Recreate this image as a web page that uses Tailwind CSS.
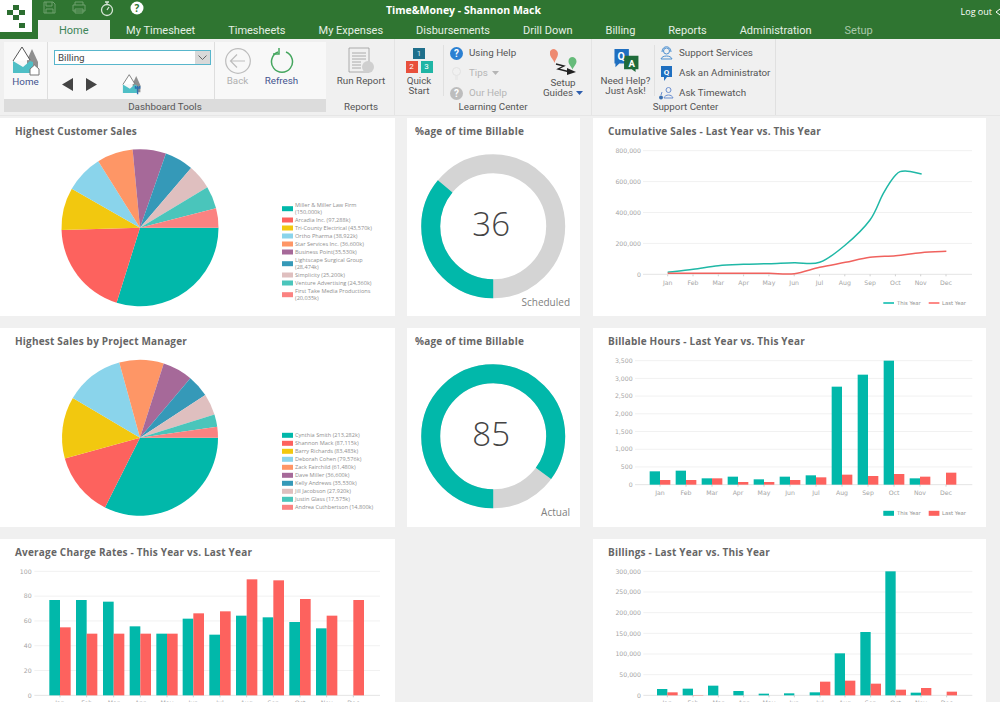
<!DOCTYPE html>
<html lang="en">
<head>
    <meta charset="UTF-8">
    <title>Time&amp;Money - Dashboard</title>
    <script src="https://cdn.jsdelivr.net/npm/@tailwindcss/browser@4"></script>
</head>
<body class="w-[1000px] h-[702px] overflow-hidden bg-[#f0f0f0] font-['Open_Sans',sans-serif]">

    <!-- Title bar and tabs -->
    <header class="relative h-[39px] bg-[#2f7531] text-white">
        <div class="absolute left-0 top-0 w-[32px] h-[32px] bg-white">
            <svg viewBox="0 0 32 32" class="w-[32px] h-[32px]" fill="#2c6e30">
                <rect x="13" y="5" width="6" height="5"/><rect x="7" y="10" width="6" height="5"/><rect x="19" y="10" width="6" height="5"/>
                <rect x="13" y="15" width="6" height="5"/><rect x="19" y="23" width="6" height="5"/>
            </svg>
        </div>
        <div class="flex h-[20px]">
            <div class="flex items-start w-[385px] pl-[43px] pt-[1px]">
                <svg viewBox="0 0 13 13" class="w-[13px] h-[13px]" fill="none" stroke="#6ea16f"><path d="M1 1h9l2 2v9H1zM3 1v4h6V1M3 12V8h7v4"/></svg>
                <svg viewBox="0 0 14 13" class="w-[14px] h-[13px] ml-[16px]" fill="none" stroke="#6ea16f"><path d="M3 4V1h8v3M1 4h12v6H1zM3 8h8v4H3z"/></svg>
                <svg viewBox="0 0 14 16" class="w-[14px] h-[16px] ml-[14px]" fill="none" stroke="#d5e5d5" stroke-width="1.3"><circle cx="7" cy="9" r="5.5"/><path d="M5 1h4M7 1v2M7 9l2-3"/></svg>
                <svg viewBox="0 0 14 14" class="w-[14px] h-[14px] ml-[16px]"><circle cx="7" cy="7" r="6.5" fill="#fff"/><text x="7" y="10.5" text-anchor="middle" font-size="10" font-weight="700" fill="#2f7531">?</text></svg>
            </div>
            <div class="w-[157px] text-[10.5px] leading-[20px] font-bold whitespace-nowrap text-center">Time&amp;Money - Shannon Mack</div>
            <div class="ml-auto flex items-center pt-[3px] text-[9px] leading-[16px]">
                <span>Log out</span>
                <svg viewBox="0 0 5 8" class="w-[5px] h-[8px] ml-[3px]" fill="none" stroke="#fff"><path d="M5 1L1 4l4 3"/></svg>
            </div>
        </div>
        <nav class="flex pl-[38px] h-[19px] text-[11px] leading-[21px] font-['Roboto',sans-serif] whitespace-nowrap text-[#e4efe4]">
            <div class="px-[21px] bg-[#f0f0f0] text-[#3d8558]">Home</div>
            <div class="px-[16.5px]">My Timesheet</div>
            <div class="px-[16.5px]">Timesheets</div>
            <div class="px-[16.5px]">My Expenses</div>
            <div class="px-[16.5px]">Disbursements</div>
            <div class="px-[16.5px]">Drill Down</div>
            <div class="px-[16.5px]">Billing</div>
            <div class="px-[16.5px]">Reports</div>
            <div class="px-[16.5px]">Administration</div>
            <div class="px-[16.5px] text-[#a9c9aa]">Setup</div>
        </nav>
    </header>

    <!-- Ribbon -->
    <section class="flex h-[77px] pl-[4px] border-b border-[#e6e6e6] font-['Roboto',sans-serif] text-[9.8px] leading-[10px] text-[#555] whitespace-nowrap">

        <!-- Dashboard Tools -->
        <div class="w-[322px] flex flex-col">
            <div class="flex h-[57px] mt-[3px] bg-[#f8f8f8]">
                <div class="w-[44px] flex flex-col items-center pt-[4px] pb-[3px] border-r border-[#dedede]">
                    <svg viewBox="11 46 28 30" class="w-[28px] h-[30px]">
                        <path d="M26 60l5-11 6 13v10H26z" fill="#8f8f8f"/>
                        <path d="M12 61l9-14 8 13" fill="#fff" stroke="#555"/>
                        <path d="M12 61l10 6 7-6 3 1v11H12z" fill="#4fbfc6"/>
                        <path d="M29 69l4.500-4 4.500 4v6h-9z" fill="#fff" stroke="#777"/>
                    </svg>
                    <span class="mt-[1px] text-[#44548f]">Home</span>
                </div>
                <div class="w-[167px] pl-[6px] pt-[8px] border-r border-[#dedede]">
                    <div class="flex items-center w-[157px] h-[15px] bg-white border border-[#58b6cc] pl-[3px] text-[#444]">
                        <span>Billing</span>
                        <span class="ml-auto flex items-center justify-center w-[15px] h-[13px] bg-[#d9d9d9]">
                            <svg viewBox="0 0 9 5" class="w-[9px] h-[5px]" fill="none" stroke="#666"><path d="M0.500 0.500l4 4 4-4"/></svg>
                        </span>
                    </div>
                    <div class="flex items-center mt-[9px]">
                        <svg viewBox="0 0 11 13" class="w-[11px] h-[13px] ml-[8px]" fill="#444"><path d="M11 0v13L0 6.500z"/></svg>
                        <svg viewBox="0 0 11 13" class="w-[11px] h-[13px] ml-[13px]" fill="#444"><path d="M0 0v13l11-6.500z"/></svg>
                        <svg viewBox="11 46 28 30" class="w-[20px] h-[21px] ml-[25px]">
                            <path d="M26 60l5-11 6 13v10H26z" fill="#8f8f8f"/>
                            <path d="M12 61l9-14 8 13" fill="#fff" stroke="#555"/>
                            <path d="M12 61l10 6 7-6 3 1v11H12z" fill="#4fbfc6"/>
                            <path d="M33 63v12M30 63v3h6v-3" fill="none" stroke="#2f6fb0" stroke-width="2"/>
                        </svg>
                    </div>
                </div>
                <div class="w-[45px] flex flex-col items-center pt-[6px] pb-[3px] text-[#b0b0b0]">
                    <svg viewBox="0 0 26 26" class="w-[26px] h-[26px]" fill="none" stroke="#bdbdbd" stroke-width="1.200"><circle cx="13" cy="13" r="12.300"/><path d="M20 13H6M12 6.500L5.500 13l6.500 6.500"/></svg>
                    <span class="mt-[2px]">Back</span>
                </div>
                <div class="w-[43px] flex flex-col items-center pt-[6px] pb-[3px] text-[#44548f]">
                    <svg viewBox="0 0 24 26" class="w-[24px] h-[26px]" fill="none" stroke="#45a65f" stroke-width="1.500"><path d="M8 4a10.500 10.500 0 1 0 8 0"/><path d="M9 0v6H3"/></svg>
                    <span class="mt-[2px]">Refresh</span>
                </div>
            </div>
            <div class="h-[13px] bg-[#dcdcdc] text-center leading-[15px]">Dashboard Tools</div>
        </div>

        <!-- Reports -->
        <div class="w-[67px] ml-[2px] flex flex-col items-center border-r border-[#e4e4e4]">
            <div class="h-[60px] flex flex-col items-center pt-[8px]">
                <svg viewBox="0 0 27 26" class="w-[27px] h-[26px]" fill="none" stroke="#9a9a9a"><path d="M1 1h20v24H1zM4 6h14M4 9h14M4 12h14M4 15h9M4 18h9M4 21h9" stroke-width="0.800"/><circle cx="20" cy="20" r="6" fill="#cfcfcf" stroke="none"/></svg>
                <span class="mt-[3px]">Run Report</span>
            </div>
            <div class="leading-[15px]">Reports</div>
        </div>

        <!-- Learning Center -->
        <div class="w-[197px] flex flex-col border-r border-[#e4e4e4]">
            <div class="h-[60px] flex">
                <div class="w-[49px] mt-[6px] mb-[3px] flex flex-col items-center border-r border-[#e0e0e0]">
                    <div class="flex items-center justify-center w-[12px] h-[12px] mt-[3px] bg-[#1f6f8b] text-[8px] text-[#cfe8ef]">1</div>
                    <div class="flex gap-[3px] mt-[2px] text-[8px]">
                        <div class="flex items-center justify-center w-[12px] h-[12px] bg-[#e8503c] text-white">2</div>
                        <div class="flex items-center justify-center w-[12px] h-[12px] bg-[#1fb5a5] text-white">3</div>
                    </div>
                    <span class="mt-[3px] text-center">Quick<br>Start</span>
                </div>
                <div class="w-[96px] pl-[6px] pt-[4px]">
                    <div class="flex items-center h-[20px] gap-[6px]">
                        <svg viewBox="0 0 13 13" class="w-[13px] h-[13px]"><circle cx="6.500" cy="6.500" r="6.500" fill="#2b80d2"/><text x="6.500" y="10" text-anchor="middle" font-size="10" font-weight="700" fill="#fff">?</text></svg>
                        <span>Using Help</span>
                    </div>
                    <div class="flex items-center h-[20px] gap-[6px] text-[#b5b5b5]">
                        <svg viewBox="0 0 13 14" class="w-[13px] h-[14px]" fill="none" stroke="#e2e2e2"><circle cx="6.500" cy="5.500" r="4"/><path d="M5 11h3M5 13h3"/></svg>
                        <span>Tips</span>
                        <svg viewBox="0 0 7 4" class="w-[7px] h-[4px] -ml-[2px]" fill="#b5b5b5"><path d="M0 0h7L3.500 4z"/></svg>
                    </div>
                    <div class="flex items-center h-[20px] gap-[6px] text-[#b5b5b5]">
                        <svg viewBox="0 0 13 13" class="w-[13px] h-[13px]"><circle cx="6.500" cy="6.500" r="6.500" fill="#bdbdbd"/><text x="6.500" y="10" text-anchor="middle" font-size="10" font-weight="700" fill="#fff">?</text></svg>
                        <span>Our Help</span>
                    </div>
                </div>
                <div class="w-[46px] pt-[10px] flex flex-col items-center">
                    <svg viewBox="0 0 28 26" class="w-[28px] h-[26px] ml-[1px]">
                        <path d="M3 0a5 5 0 0 1 5 5c0 3-3 6-3.500 9C4 11 0 8 0 5a4 4 0 0 1 3-5z" fill="#ee8a70"/>
                        <path d="M22 8a4.500 4.500 0 0 1 4.500 4.500c0 3-3 5-4 8-1-3-4-5-4-8A4.500 4.500 0 0 1 22 8z" fill="#66bb7a"/>
                        <path d="M6 15l8 2-6 3 12 3" fill="none" stroke="#222" stroke-width="1.300"/>
                        <path d="M17 19l9 4-9 3z" fill="#222"/>
                    </svg>
                    <span class="mt-[3px]">Setup</span>
                    <span class="flex items-center gap-[3px]">Guides<svg viewBox="0 0 7 4" class="w-[7px] h-[4px]" fill="#2f5fae"><path d="M0 0h7L3.500 4z"/></svg></span>
                </div>
            </div>
            <div class="text-center leading-[15px]">Learning Center</div>
        </div>

        <!-- Support Center -->
        <div class="w-[184px] flex flex-col border-r border-[#e0e0e0]">
            <div class="h-[60px] flex">
                <div class="w-[63px] mt-[6px] mb-[3px] pl-[5px] flex flex-col items-center border-r border-[#e0e0e0]">
                    <svg viewBox="0 0 27 24" class="w-[27px] h-[24px] mt-[4px]">
                        <path d="M2 0h15v15H7l-4 4v-4H2z" fill="#1f6fc0"/>
                        <path d="M12 7h15v14h-3v3l-4-3h-8z" fill="#1f6b3a"/>
                        <text x="9" y="11.500" text-anchor="middle" font-size="11" font-weight="700" fill="#fff">Q</text>
                        <text x="20" y="18.500" text-anchor="middle" font-size="10" font-weight="700" fill="#fff">A</text>
                    </svg>
                    <span class="mt-[4px] text-center">Need Help?<br>Just Ask!</span>
                </div>
                <div class="pl-[4px] pt-[4px]">
                    <div class="flex items-center h-[20px] gap-[5px]">
                        <svg viewBox="0 0 15 14" class="w-[15px] h-[14px]" fill="none" stroke="#4b8fd0"><circle cx="7.500" cy="5" r="3"/><path d="M3 6c0-7 9-7 9 0M2 13c1-4 10-4 11 0z"/></svg>
                        <span>Support Services</span>
                    </div>
                    <div class="flex items-center h-[20px] gap-[5px]">
                        <svg viewBox="0 0 15 15" class="w-[15px] h-[15px]"><path d="M2 0h11v11H8l-3 4v-4H2z" fill="#1f6fc0"/><text x="7.500" y="8.500" text-anchor="middle" font-size="8" font-weight="700" fill="#fff">Q</text></svg>
                        <span>Ask an Administrator</span>
                    </div>
                    <div class="flex items-center h-[20px] gap-[5px]">
                        <svg viewBox="0 0 15 14" class="w-[15px] h-[14px]" fill="none" stroke="#6b8fd0"><circle cx="9.500" cy="4" r="2.500"/><path d="M5 12c1-4 8-4 9 0zM3 6l-1 3"/><circle cx="2" cy="11.500" r="2" fill="#3b6fb0" stroke="none"/></svg>
                        <span>Ask Timewatch</span>
                    </div>
                </div>
            </div>
            <div class="pl-[4px] text-center leading-[15px]">Support Center</div>
        </div>
    </section>

    <!-- Dashboard cards -->
    <main class="grid grid-cols-[395px_173px_394px] grid-rows-[198px_199px_163px] gap-x-[12px] gap-y-[12px] pt-[2px]">
        <div class="bg-white overflow-hidden">
            <h2 class="pl-[15px] pt-[6px] h-[22px] text-[10px] leading-[14px] font-bold tracking-[0.2px] text-[#666]">Highest Customer Sales</h2>
            <svg id="pie-customers" viewBox="0 140 395 176" class="w-[395px] h-[176px]"></svg>
        </div>
        <div class="bg-white overflow-hidden">
            <h2 class="pl-[8px] pt-[6px] h-[22px] text-[10px] leading-[14px] font-bold tracking-[0.2px] text-[#666]">%age of time Billable</h2>
            <svg id="donut-scheduled" viewBox="407 140 173 176" class="w-[173px] h-[176px]"></svg>
        </div>
        <div class="ml-[1px] bg-white overflow-hidden">
            <h2 class="pl-[15px] pt-[6px] h-[22px] text-[10px] leading-[14px] font-bold tracking-[0.2px] text-[#666]">Cumulative Sales - Last Year vs. This Year</h2>
            <svg id="line-sales" viewBox="593 140 393 176" class="w-[393px] h-[176px]"></svg>
        </div>

        <div class="bg-white overflow-hidden">
            <h2 class="pl-[15px] pt-[6px] h-[22px] text-[10px] leading-[14px] font-bold tracking-[0.2px] text-[#666]">Highest Sales by Project Manager</h2>
            <svg id="pie-managers" viewBox="0 350 395 177" class="w-[395px] h-[177px]"></svg>
        </div>
        <div class="bg-white overflow-hidden">
            <h2 class="pl-[8px] pt-[6px] h-[22px] text-[10px] leading-[14px] font-bold tracking-[0.2px] text-[#666]">%age of time Billable</h2>
            <svg id="donut-actual" viewBox="407 350 173 177" class="w-[173px] h-[177px]"></svg>
        </div>
        <div class="ml-[1px] bg-white overflow-hidden">
            <h2 class="pl-[15px] pt-[6px] h-[22px] text-[10px] leading-[14px] font-bold tracking-[0.2px] text-[#666]">Billable Hours - Last Year vs. This Year</h2>
            <svg id="bars-hours" viewBox="593 350 393 177" class="w-[393px] h-[177px]"></svg>
        </div>

        <div class="bg-white overflow-hidden">
            <h2 class="pl-[15px] pt-[6px] h-[22px] text-[10px] leading-[14px] font-bold tracking-[0.2px] text-[#666]">Average Charge Rates - This Year vs. Last Year</h2>
            <svg id="bars-rates" viewBox="0 561 395 141" class="w-[395px] h-[141px]"></svg>
        </div>
        <div></div>
        <div class="ml-[1px] bg-white overflow-hidden">
            <h2 class="pl-[15px] pt-[6px] h-[22px] text-[10px] leading-[14px] font-bold tracking-[0.2px] text-[#666]">Billings - Last Year vs. This Year</h2>
            <svg id="bars-billings" viewBox="593 561 393 141" class="w-[393px] h-[141px]"></svg>
        </div>
    </main>

<script>
    // Chart coordinates are page pixels, every svg viewBox is its place on the page
    const TEAL = '#01b8aa', RED = '#fd625e';
    const COLORS = [TEAL, RED, '#f2c80f', '#8ad4eb', '#fe9666', '#a66999', '#3599b8', '#dfbfbf', '#4ac5bb', '#fb8281'];
    const MONTHS = ['Jan', 'Feb', 'Mar', 'Apr', 'May', 'Jun', 'Jul', 'Aug', 'Sep', 'Oct', 'Nov', 'Dec'];
    const AXIS_FONT = 'font-family="DejaVu Sans, sans-serif" font-size="6.2" fill="#a5a5a5"';

    function pie(id, cx, cy, r, ends, legend) {
        let html = '';
        let startX = cx + r, startY = cy;
        ends.forEach(([ex, ey], i) => {
            const a = Math.atan2(ey, ex);
            const x = cx + r * Math.cos(a), y = cy + r * Math.sin(a);
            const prev = i === 0 ? 0 : Math.atan2(ends[i - 1][1], ends[i - 1][0]);
            let delta = a - prev;
            if (delta < 0) delta += 2 * Math.PI;
            html += `<path d="M${cx} ${cy}L${startX} ${startY}A${r} ${r} 0 ${delta > Math.PI ? 1 : 0} 1 ${x} ${y}Z" fill="${COLORS[i]}"/>`;
            startX = x; startY = y;
        });
        legend.forEach(([swatchY, lines], i) => {
            html += `<rect x="282" y="${swatchY - 2.5}" width="11" height="5" fill="${COLORS[i]}"/>`;
            lines.forEach(([y, text]) => {
                html += `<text x="295" y="${y + 1.9}" font-size="5.6" fill="#8f8f8f">${text}</text>`;
            });
        });
        document.getElementById(id).innerHTML = html;
    }

    function donut(id, cy, percent, value, caption) {
        const cx = 493.2, r = 62.5, c = 2 * Math.PI * r;
        const teal = c * percent / 100;
        const html = `<circle cx="${cx}" cy="${cy}" r="${r}" fill="none" stroke="#d4d4d4" stroke-width="19"/>
            <circle cx="${cx}" cy="${cy}" r="${r}" fill="none" stroke="${TEAL}" stroke-width="19" stroke-dasharray="${teal} ${c}" transform="rotate(90 ${cx} ${cy})"/>
            <text x="${cx - 2}" y="${cy + 10}" text-anchor="middle" font-size="33" font-weight="300" fill="#444">${value}</text>
            <text x="570" y="${cy + 79.500}" text-anchor="end" font-size="10" fill="#808080">${caption}</text>`;
        document.getElementById(id).innerHTML = html;
    }

    // Y axis grid, value labels, month labels and ticks
    function axes(o) {
        let html = '';
        o.labels.forEach((label, i) => {
            const y = o.bottom - (o.bottom - o.top) * i / (o.labels.length - 1);
            html += `<line x1="${o.left}" x2="${o.right}" y1="${y}" y2="${y}" stroke="${i ? '#f1f1f1' : '#e4e4e4'}"/>`;
            html += `<text x="${o.labelX}" y="${y + 2.2}" text-anchor="end" ${AXIS_FONT}>${label}</text>`;
        });
        o.centers.forEach((x, i) => {
            html += `<line x1="${x}" x2="${x}" y1="${o.bottom}" y2="${o.bottom + 2}" stroke="#d0d0d0"/>`;
            html += `<text x="${x}" y="${o.monthY}" text-anchor="middle" ${AXIS_FONT}>${MONTHS[i]}</text>`;
        });
        return html;
    }

    function legendRow(y, bars) {
        const mark = (x, fill) => bars
            ? `<rect x="${x}" y="${y - 2.500}" width="10.700" height="5" fill="${fill}"/>`
            : `<line x1="${x}" x2="${x + 10.700}" y1="${y}" y2="${y}" stroke="${fill}" stroke-width="1.500"/>`;
        const label = (x, text) => `<text x="${x}" y="${y + 2}" font-family="DejaVu Sans, sans-serif" font-size="5.300" fill="#8f8f8f">${text}</text>`;
        return mark(883.3, TEAL) + label(897, 'This Year') + mark(928.7, RED) + label(942, 'Last Year');
    }

    // Tops are read off the chart, 3x zoom values relative to x0 / y0
    function bars(id, o) {
        const zx = v => o.x0 + v / 3, zy = v => o.y0 + v / 3;
        const bottom = zy(o.zeroZ);
        const centers = o.centersZ.map(zx);
        let html = axes({ ...o, centers, left: zx(o.leftZ), right: zx(o.rightZ), top: zy(o.topZ), bottom, labelX: zx(o.labelZ), monthY: zy(o.monthZ) });
        const w = o.widthZ / 3;
        centers.forEach((x, i) => {
            if (o.teal[i]) html += `<rect x="${x - w}" y="${zy(o.teal[i])}" width="${w}" height="${bottom - zy(o.teal[i])}" fill="${TEAL}"/>`;
            if (o.red[i]) html += `<rect x="${x}" y="${zy(o.red[i])}" width="${w}" height="${bottom - zy(o.red[i])}" fill="${RED}"/>`;
        });
        if (o.legendY) html += legendRow(o.legendY, true);
        document.getElementById(id).innerHTML = html;
    }

    function smooth(points) {
        let d = `M${points[0][0]} ${points[0][1]}`;
        for (let i = 0; i < points.length - 1; i++) {
            const p0 = points[i - 1] || points[i], p1 = points[i], p2 = points[i + 1], p3 = points[i + 2] || p2;
            d += `C${p1[0] + (p2[0] - p0[0]) / 6} ${p1[1] + (p2[1] - p0[1]) / 6} ${p2[0] - (p3[0] - p1[0]) / 6} ${p2[1] - (p3[1] - p1[1]) / 6} ${p2[0]} ${p2[1]}`;
        }
        return d;
    }

    pie('pie-customers', 140, 227.7, 78.5,
        [[-70, 224], [-233, 7], [-202, -115], [-123, -196], [-22, -233], [77, -220], [151, -176], [200, -120], [228, -58], [236, 0]],
        [[208.7, [[205, 'Miller &amp; Miller Law Firm'], [212, '(150,000k)']]], [220, [[220, 'Arcadia Inc. (97,288k)']]], [228, [[228, 'Tri-County Electrical (43,570k)']]],
         [236, [[236, 'Ortho Pharma (38,922k)']]], [244, [[244, 'Star Services Inc. (36,600k)']]], [252, [[252, 'Business Point(35,530k)']]],
         [263.7, [[260, 'Lightscape Surgical Group'], [267, '(28,474k)']]], [275, [[275, 'Simplicity (25,200k)']]], [283, [[283, 'Venture Advertising (24,360k)']]],
         [294.7, [[291, 'First Take Media Productions'], [298, '(20,035k)']]]]);

    pie('pie-managers', 140, 437.7, 78,
        [[-104, 207], [-224, 62], [-200, -118], [-62, -225], [71, -222], [142, -168], [196, -128], [224, -70], [234, -33], [236, 0]],
        [[435.3, [[435.3, 'Cynthia Smith (213,282k)']]], [443.3, [[443.3, 'Shannon Mack (87,115k)']]], [451.3, [[451.3, 'Barry Richards (83,483k)']]],
         [459.3, [[459.3, 'Deborah Cohen (79,576k)']]], [467.3, [[467.3, 'Zack Fairchild (61,480k)']]], [475.3, [[475.3, 'Dave Miller (36,600k)']]],
         [483.3, [[483.3, 'Kelly Andrews (35,530k)']]], [491.3, [[491.3, 'Jill Jacobson (27,920k)']]], [499.3, [[499.3, 'Justin Glass (17,575k)']]],
         [507.3, [[507.3, 'Andrea Cuthbertson (14,800k)']]]]);

    donut('donut-scheduled', 226.3, 36, '36', 'Scheduled');
    donut('donut-actual', 436.3, 85, '85', 'Actual');

    // Cumulative sales
    const lineX = v => 590 + v / 3, lineY = v => 120 + v / 3;
    const toPage = pts => pts.map(([x, y]) => [lineX(x), lineY(y)]);
    const tealLine = [[233, 457], [310, 448], [385, 437], [460, 433], [537, 431], [613, 428], [689, 427], [766, 375], [840, 300], [880, 220], [917, 165], [945, 153], [995, 162]];
    const redLine = [[233, 460], [310, 460], [385, 460], [460, 460], [537, 460], [613, 461], [689, 442], [766, 427], [840, 412], [917, 407], [993, 398], [1069, 394]];
    document.getElementById('line-sales').innerHTML =
        axes({ labels: ['0', '200,000', '400,000', '600,000', '800,000'], centers: MONTHS.map((_, i) => 667.7 + i * 25.3), left: 643, right: 972, top: 150.7, bottom: 274.3, labelX: 641, monthY: 285 }) +
        `<path d="${smooth(toPage(tealLine))}" fill="none" stroke="#1fb8a6" stroke-width="1.500"/>` +
        `<path d="${smooth(toPage(redLine))}" fill="none" stroke="#f0625e" stroke-width="1.500"/>` +
        legendRow(303, false);

    bars('bars-hours', {
        x0: 590, y0: 330, zeroZ: 464, topZ: 92, leftZ: 135, rightZ: 1147, labelZ: 128, monthZ: 495, widthZ: 31, legendY: 513.3,
        labels: ['0', '500', '1,000', '1,500', '2,000', '2,500', '3,000', '3,500'],
        centersZ: [210, 288, 366, 444, 522, 600, 678, 756, 834, 912, 990, 1068],
        teal: [424, 422, 445, 440, 448, 440, 436, 170, 134, 92, 445, 0],
        red: [450, 450, 445, 456, 456, 450, 442, 434, 438, 432, 440, 428]
    });

    bars('bars-rates', {
        x0: 0, y0: 540, zeroZ: 466, topZ: 94, leftZ: 103, rightZ: 1140, labelZ: 95, monthZ: 496, widthZ: 32,
        labels: ['0', '20', '40', '60', '80', '100'],
        centersZ: [180, 260, 341, 421, 501, 580, 660, 740, 820, 900, 980, 1060],
        teal: [180, 180, 185, 259, 281, 236, 284, 227, 232, 246, 265, 0],
        red: [262, 281, 281, 281, 281, 220, 214, 118, 121, 177, 227, 180]
    });

    bars('bars-billings', {
        x0: 590, y0: 540, zeroZ: 466, topZ: 94, leftZ: 160, rightZ: 1147, labelZ: 153, monthZ: 496, widthZ: 31,
        labels: ['0', '50,000', '100,000', '150,000', '200,000', '250,000', '300,000'],
        centersZ: [232, 309, 385, 461, 537, 613, 690, 765, 842, 917, 993, 1070],
        teal: [447, 446, 437, 453, 461, 460, 457, 340, 276, 94, 458, 0],
        red: [457, 465, 0, 0, 0, 0, 425, 422, 431, 449, 444, 455]
    });
</script>
</body>
</html>
